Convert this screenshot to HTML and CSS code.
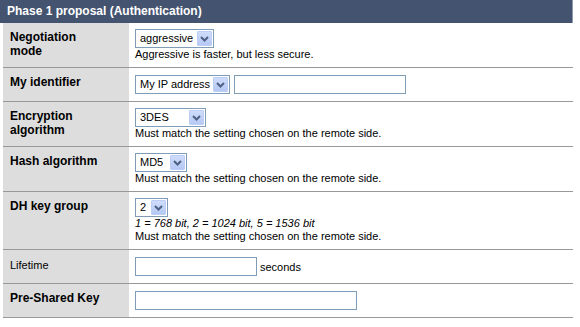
FILE: index.html
```html
<!DOCTYPE html>
<html>
<head>
<meta charset="utf-8">
<link rel="stylesheet" href="styles.css">
</head>
<body>
<div class="panel">
  <div class="head">Phase 1 proposal (Authentication)</div>
  <div class="rows">
    <div class="row">
      <div class="label">Negotiation mode</div>
      <div class="value">
        <div class="select w-aggr"><span class="opt">aggressive</span><span class="arrow"><svg width="9" height="6" viewBox="0 0 9 6"><polyline points="1,1 4.5,4.5 8,1" fill="none" stroke="#4d6185" stroke-width="2"/></svg></span></div>
        <div class="note">Aggressive is faster, but less secure.</div>
      </div>
    </div>
    <div class="row">
      <div class="label">My identifier</div>
      <div class="value inline">
        <div class="select w-myip"><span class="opt">My IP address</span><span class="arrow"><svg width="9" height="6" viewBox="0 0 9 6"><polyline points="1,1 4.5,4.5 8,1" fill="none" stroke="#4d6185" stroke-width="2"/></svg></span></div>
        <div class="input w-ident"></div>
      </div>
    </div>
    <div class="row">
      <div class="label">Encryption algorithm</div>
      <div class="value">
        <div class="select w-3des"><span class="opt">3DES</span><span class="arrow"><svg width="9" height="6" viewBox="0 0 9 6"><polyline points="1,1 4.5,4.5 8,1" fill="none" stroke="#4d6185" stroke-width="2"/></svg></span></div>
        <div class="note">Must match the setting chosen on the remote side.</div>
      </div>
    </div>
    <div class="row">
      <div class="label">Hash algorithm</div>
      <div class="value">
        <div class="select w-md5"><span class="opt">MD5</span><span class="arrow"><svg width="9" height="6" viewBox="0 0 9 6"><polyline points="1,1 4.5,4.5 8,1" fill="none" stroke="#4d6185" stroke-width="2"/></svg></span></div>
        <div class="note">Must match the setting chosen on the remote side.</div>
      </div>
    </div>
    <div class="row">
      <div class="label">DH key group</div>
      <div class="value">
        <div class="select w-dh"><span class="opt">2</span><span class="arrow"><svg width="9" height="6" viewBox="0 0 9 6"><polyline points="1,1 4.5,4.5 8,1" fill="none" stroke="#4d6185" stroke-width="2"/></svg></span></div>
        <div class="note italic">1 = 768 bit, 2 = 1024 bit, 5 = 1536 bit</div>
        <div class="note">Must match the setting chosen on the remote side.</div>
      </div>
    </div>
    <div class="row">
      <div class="label plain">Lifetime</div>
      <div class="value inline">
        <div class="input w-life"></div>
        <span class="unit">seconds</span>
      </div>
    </div>
    <div class="row">
      <div class="label">Pre-Shared Key</div>
      <div class="value inline">
        <div class="input w-psk"></div>
      </div>
    </div>
  </div>
</div>
</body>
</html>
```

FILE: styles.css
```css
html, body {
  margin: 0;
  padding: 0;
  background: #ffffff;
}

body {
  font-family: "Liberation Sans", Arial, sans-serif;
  font-size: 11px;
  color: #000000;
}

.panel {
  width: 573px;
}

.head {
  height: 23px;
  box-sizing: border-box;
  background: #44536f;
  border-right: 1px solid #8f99ad;
  color: #ffffff;
  font-weight: bold;
  font-size: 12px;
  line-height: 23px;
  padding-left: 7px;
}

.rows {
  margin-left: 3px;
}

.row {
  display: grid;
  grid-template-columns: 126px 1fr;
  border-bottom: 1px solid #999999;
}

.label {
  background: #dddddd;
  font-weight: bold;
  font-size: 12px;
  line-height: 14px;
  padding: 7px 20px 7px 7px;
}

.label.plain {
  font-weight: normal;
  font-size: 11px;
  padding-top: 8px;
}

.value {
  padding: 6px 6px 6px 6px;
  display: flex;
  flex-direction: column;
  align-items: flex-start;
}

.value.inline {
  flex-direction: row;
  align-items: center;
  gap: 4px;
}

.note {
  line-height: 13px;
}

.note.italic {
  font-style: italic;
}

.unit {
  margin-left: -1px;
}

.select {
  display: flex;
  align-items: center;
  justify-content: space-between;
  box-sizing: border-box;
  height: 19px;
  border: 1px solid #7f9db9;
  background: #ffffff;
  padding-left: 4px;
  padding-right: 1px;
  line-height: 17px;
}

.arrow {
  box-sizing: border-box;
  width: 15px;
  height: 15px;
  border: 1px solid #bccdf6;
  border-radius: 1px;
  background: linear-gradient(#cfdcfb, #b5c9f4);
  display: flex;
  align-items: center;
  justify-content: center;
}

.arrow svg {
  display: block;
}

.input {
  box-sizing: border-box;
  height: 19px;
  margin: 1px 0;
  border: 1px solid #7f9db9;
  background: #ffffff;
}

.w-aggr { width: 79px; }
.w-myip { width: 95px; }
.w-3des { width: 71px; }
.w-md5 { width: 52px; }
.w-dh { width: 33px; }
.w-ident { width: 172px; }
.w-life { width: 122px; }
.w-psk { width: 222px; }
```
